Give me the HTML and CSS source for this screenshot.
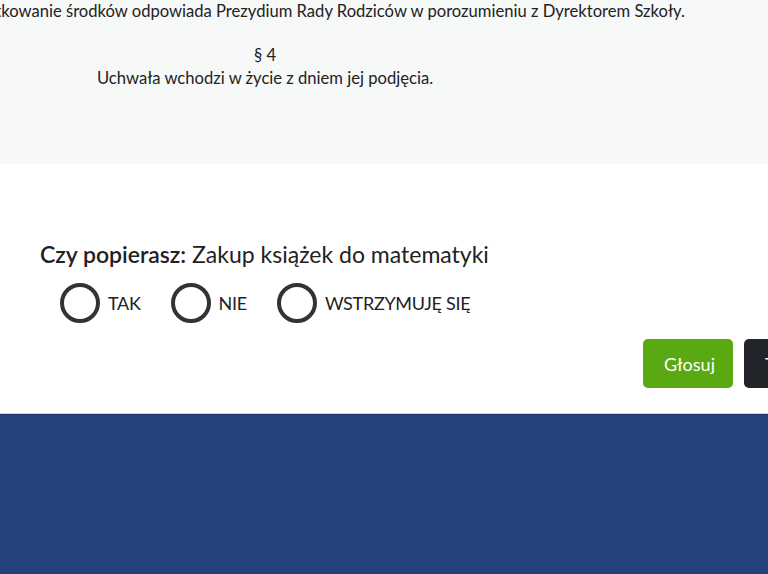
FILE: index.html
```html
<!DOCTYPE html>
<html lang="pl">
<head>
<meta charset="utf-8">
<title>Głosowanie</title>
<link rel="stylesheet" href="styles.css">
</head>
<body>
<section class="resolution">
  <div class="resolution-inner">
    <p class="line first"><span>Za wydatkowanie środków odpowiada Prezydium Rady Rodziców w porozumieniu z Dyrektorem Szkoły.</span></p>
    <p class="line para">§ 4</p>
    <p class="line">Uchwała wchodzi w życie z dniem jej podjęcia.</p>
  </div>
</section>
<section class="vote">
  <h2 class="question"><span class="q-label">Czy popierasz:</span> Zakup książek do matematyki</h2>
  <div class="options">
    <label class="option"><span class="circle"></span><span class="opt-text">TAK</span></label>
    <label class="option"><span class="circle"></span><span class="opt-text">NIE</span></label>
    <label class="option"><span class="circle"></span><span class="opt-text">WSTRZYMUJĘ SIĘ</span></label>
  </div>
  <div class="actions">
    <button class="btn btn-green">Głosuj</button>
    <button class="btn btn-dark">Tablica wyników</button>
  </div>
</section>
<footer class="footer"></footer>
</body>
</html>
```
FILE: styles.css
```css
html, body {
  margin: 0;
  padding: 0;
}
body {
  width: 768px;
  overflow: hidden;
  font-family: "Lato", "Open Sans", sans-serif;
  color: #222;
  background: #fff;
}
.resolution {
  background: #f7f8f8;
  height: 164px;
  overflow: hidden;
}
.resolution-inner {
  width: 530px;
  text-align: center;
  padding-top: 0;
}
.line {
  margin: 0;
  font-size: 16.6px;
  line-height: 23px;
}
.line.first {
  display: flex;
  justify-content: flex-end;
  width: 685px;
  white-space: nowrap;
}
.line.first span {
  flex: none;
}
.line.para {
  margin-top: 21px;
}
.vote {
  height: 249px;
  overflow: hidden;
}
.question {
  margin: 0;
  padding: 76px 0 0 40px;
  font-size: 23px;
  font-weight: 400;
  line-height: 28px;
  color: #222;
}
.q-label {
  font-weight: 600;
}
.options {
  display: flex;
  gap: 30px;
  padding: 15px 0 0 60px;
}
.option {
  display: flex;
  align-items: center;
  gap: 8px;
}
.circle {
  width: 32px;
  height: 32px;
  border: 4px solid #333;
  border-radius: 50%;
}
.opt-text {
  font-size: 18px;
  letter-spacing: -0.3px;
  color: #222;
}
.actions {
  display: flex;
  gap: 11px;
  padding: 16px 0 0 643px;
}
.btn {
  flex: none;
  height: 49px;
  border: none;
  border-radius: 5px;
  font-family: "Lato", "Open Sans", sans-serif;
  font-size: 18px;
  color: #fff;
  padding: 0 21px;
}
.btn-green {
  background: #5aa812;
  width: 90px;
}
.btn-dark {
  background: #212529;
}
.footer {
  height: 161px;
  background: #24437d;
  border-top: 1px solid #c9d5ea;
  box-shadow: inset 0 1px 0 #1e3868;
}
```
